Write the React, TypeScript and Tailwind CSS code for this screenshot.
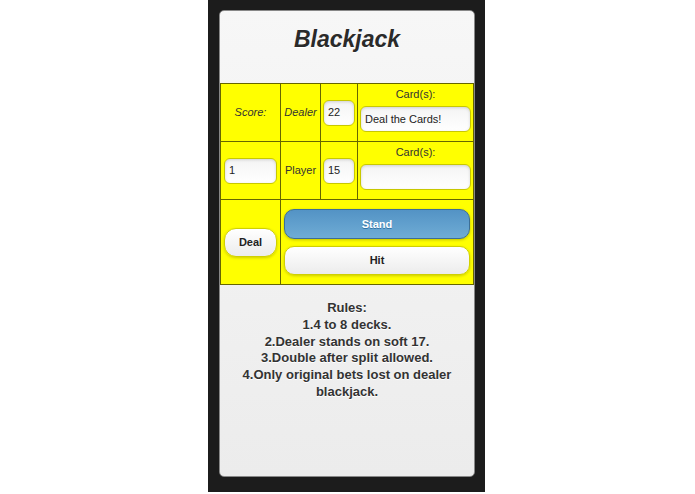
const rules = [
  "Rules:",
  "1.4 to 8 decks.",
  "2.Dealer stands on soft 17.",
  "3.Double after split allowed.",
  "4.Only original bets lost on dealer blackjack.",
];

function Field({ value, className }: { value: string; className: string }) {
  return (
    <div
      className={`flex items-center rounded-[6px] border border-[#c8c800] bg-gradient-to-b from-[#f4f4f4] to-white pl-[4px] text-[11px] text-[#222] shadow-[inset_0_1px_3px_rgba(0,0,0,0.15)] ${className}`}
    >
      {value}
    </div>
  );
}

export default function App() {
  return (
    <div className="h-[494px] w-full bg-white pl-[208px] font-['Liberation_Sans',Arial,sans-serif]">
      <div className="h-[492px] w-[277px] bg-[#1c1c1c] pl-[11px] pr-[10px] pt-[10px]">
        <div className="flex h-[467px] flex-col rounded-[5px] border border-[#888] bg-gradient-to-b from-[#f7f7f7] to-[#ececec]">
          <h1 className="mt-[14px] text-center text-[23px] font-bold italic leading-[28px] text-[#2a2a2a] [text-shadow:0_1px_0_#fff]">
            Blackjack
          </h1>

          <div className="mt-[30px] grid grid-cols-[60px_40px_37px_1fr] grid-rows-[58px_58px_84px] border border-[#666600] bg-[#ffff00] text-[11px] text-[#333]">
            {/* dealer row */}
            <div className="flex items-center justify-center border-b border-r border-[#666600] italic">
              Score:
            </div>
            <div className="flex items-center justify-center border-b border-r border-[#666600] italic">
              Dealer
            </div>
            <div className="flex items-center justify-center border-b border-r border-[#666600]">
              <Field value="22" className="h-[26px] w-[32px]" />
            </div>
            <div className="flex flex-col items-center border-b border-[#666600] px-[2px] pt-[4px]">
              <span className="leading-[12px]">Card(s):</span>
              <Field value="Deal the Cards!" className="mt-[6px] h-[26px] w-full" />
            </div>

            {/* player row */}
            <div className="flex items-center justify-center border-b border-r border-[#666600] px-[3px]">
              <Field value="1" className="h-[26px] w-full" />
            </div>
            <div className="flex items-center justify-center border-b border-r border-[#666600]">
              Player
            </div>
            <div className="flex items-center justify-center border-b border-r border-[#666600]">
              <Field value="15" className="h-[26px] w-[32px]" />
            </div>
            <div className="flex flex-col items-center border-b border-[#666600] px-[2px] pt-[4px]">
              <span className="leading-[12px]">Card(s):</span>
              <Field value="" className="mt-[6px] h-[26px] w-full" />
            </div>

            {/* actions */}
            <div className="flex items-center justify-center border-r border-[#666600] px-[3px]">
              <button className="h-[29px] w-full rounded-[12px] border border-[#d0d000] bg-gradient-to-b from-white to-[#ececec] text-[11px] font-bold text-[#222] shadow-[0_1px_3px_rgba(0,0,0,0.2)]">
                Deal
              </button>
            </div>
            <div className="col-span-3 flex flex-col gap-[7px] px-[3px] pt-[9px]">
              <button className="h-[30px] w-full rounded-[10px] border border-[#3c6e96] bg-gradient-to-b from-[#5393c5] to-[#6facd5] text-[11px] font-bold text-white shadow-[0_1px_3px_rgba(0,0,0,0.25)] [text-shadow:0_1px_0_#3373a5]">
                Stand
              </button>
              <button className="h-[29px] w-full rounded-[10px] border border-[#d0d000] bg-gradient-to-b from-white to-[#ececec] text-[11px] font-bold text-[#222] shadow-[0_1px_3px_rgba(0,0,0,0.2)]">
                Hit
              </button>
            </div>
          </div>

          <div className="mt-[15px] px-[16px] text-center text-[13px] font-bold leading-[16.8px] text-[#333] [text-shadow:0_1px_0_#fff]">
            {rules.map((line) => (
              <p key={line}>{line}</p>
            ))}
          </div>
        </div>
      </div>
    </div>
  );
}
